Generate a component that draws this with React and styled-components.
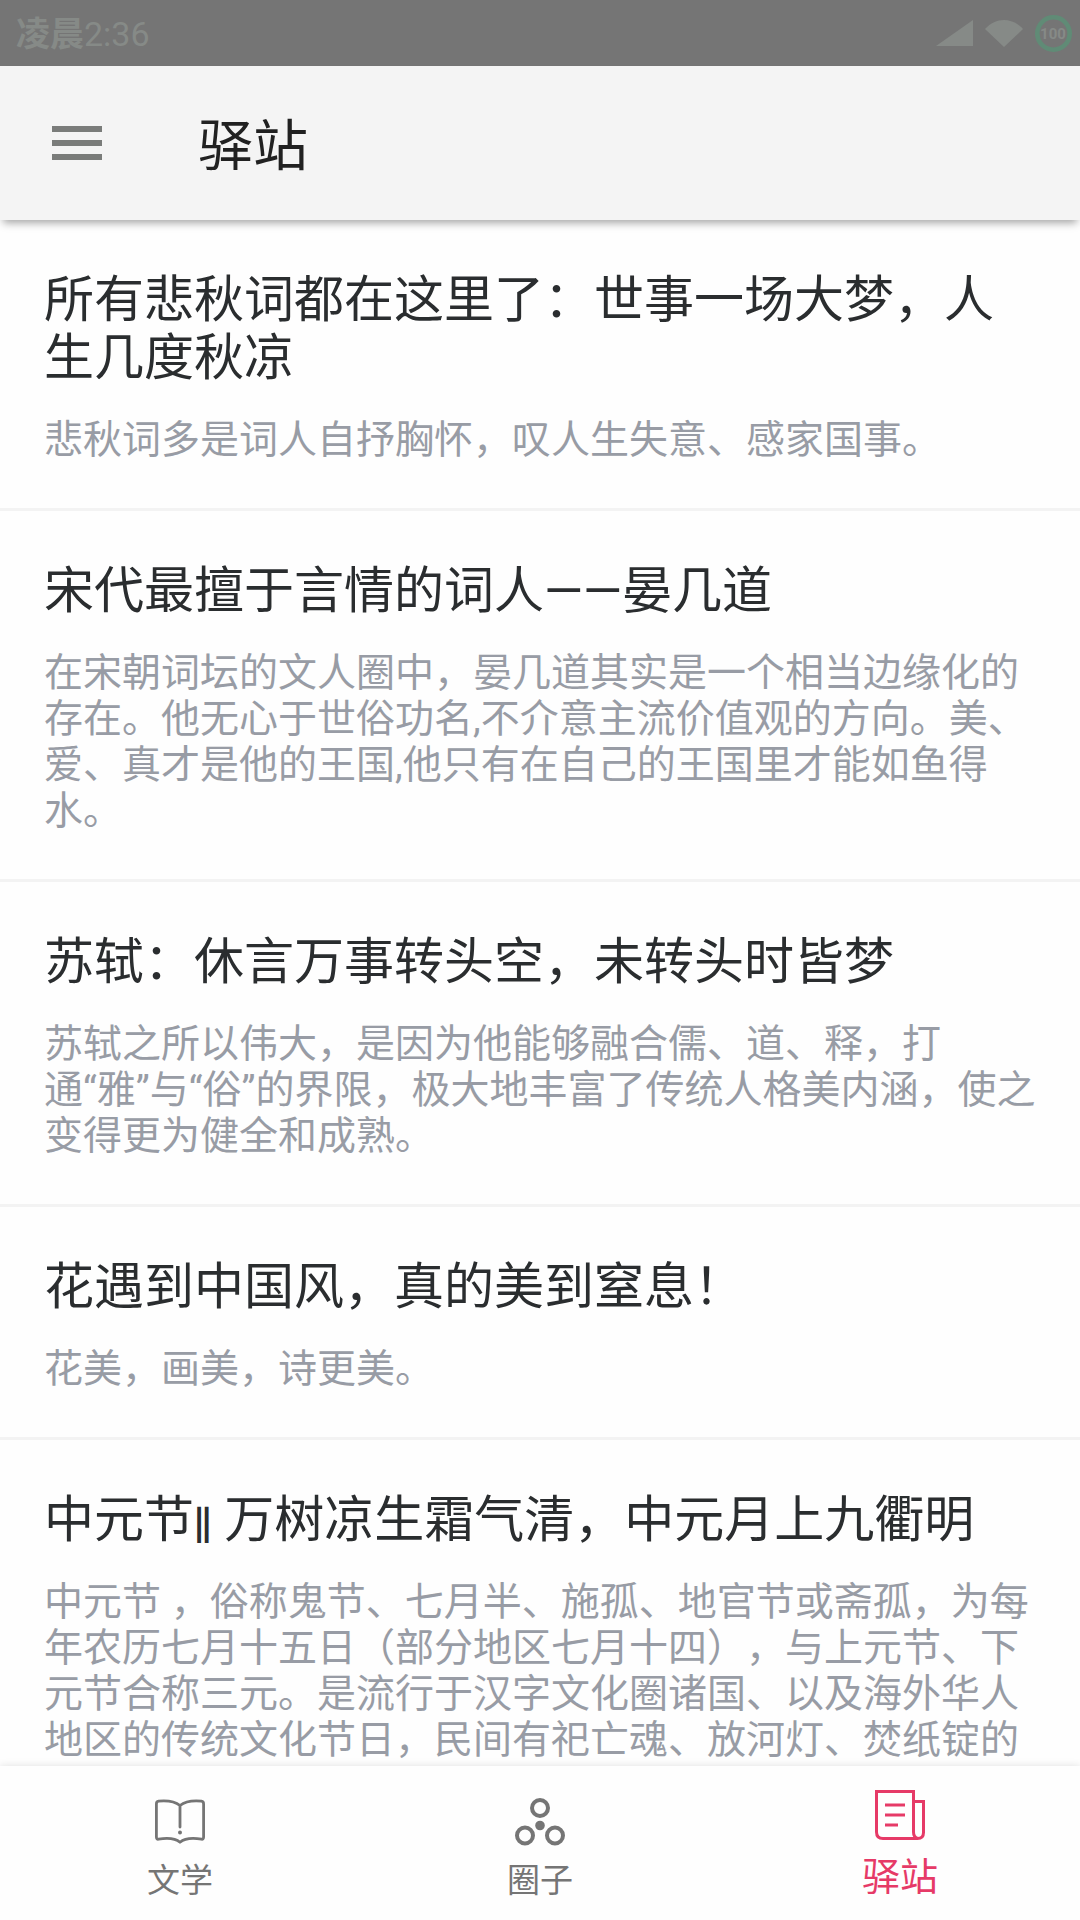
import React from "react";
import styled, { createGlobalStyle } from "styled-components";

const GlobalStyle = createGlobalStyle`
  * {
    box-sizing: border-box;
  }
  body {
    margin: 0;
    background: #fefefe;
    font-family: Roboto, "Noto Sans CJK SC", sans-serif;
    text-spacing-trim: space-all;
  }
`;

const Screen = styled.div`
  display: flex;
  flex-direction: column;
  height: 100vh;
`;

const StatusBar = styled.div`
  display: flex;
  align-items: center;
  justify-content: space-between;
  flex: none;
  height: 66px;
  padding: 0 8px 0 16px;
  background: #757575;
  color: #868a87;
`;
const Clock = styled.span`
  padding-top: 2px;
  font-size: 34px;
  line-height: 40px;
`;
const Period = styled.span`
  font-weight: 700;
`;
const StatusIcons = styled.div`
  display: flex;
  align-items: center;
  gap: 12px;
`;

const Header = styled.header`
  display: flex;
  align-items: center;
  flex: none;
  height: 154px;
  padding: 0 52px;
  gap: 96px;
  background: #f4f4f4;
  box-shadow: 0 6px 8px -3px rgba(0, 0, 0, 0.35);
  z-index: 1;
`;
const MenuButton = styled.button`
  display: flex;
  padding: 0;
  border: 0;
  background: none;
  cursor: pointer;
`;
const HeaderTitle = styled.h1`
  margin: 0;
  padding-top: 6px;
  font-size: 55px;
  font-weight: 400;
  line-height: 64px;
  color: #212121;
`;

const ArticleList = styled.main`
  flex: 1;
  min-height: 0;
  overflow-y: auto;
  scrollbar-width: none;
`;
const Article = styled.article`
  display: flex;
  flex-direction: column;
  gap: 30px;
  padding: 51px 44px 45px;
  border-bottom: 3px solid #f3f3f3;
`;
const ArticleTitle = styled.h2`
  margin: 0;
  font-size: 50px;
  font-weight: 400;
  line-height: 58px;
  color: #2a2d2f;
`;
const Summary = styled.p`
  margin: 0;
  font-size: 39px;
  line-height: 46px;
  color: #989ca5;
`;
const Bars = styled.span`
  font-family: Lato, "Liberation Sans", sans-serif;
  font-size: 39px;
  font-weight: 700;
  line-height: 1;
`;

const TabBar = styled.nav`
  display: flex;
  flex: none;
  height: 154px;
  background: #fefefe;
  box-shadow: 0 0 8px rgba(0, 0, 0, 0.12);
  z-index: 1;
`;
const Tab = styled.a`
  display: flex;
  flex: 1;
  flex-direction: column;
  align-items: center;
  justify-content: flex-end;
  gap: ${(props) => (props.$active ? "13px" : "15px")};
  padding-bottom: 19px;
  font-size: ${(props) => (props.$active ? "38px" : "33px")};
  line-height: ${(props) => (props.$active ? "48px" : "40px")};
  color: ${(props) => (props.$active ? "#e63a67" : "#757575")};
  text-decoration: none;
`;

const SignalIcon = () => (
  <svg width="37" height="26" viewBox="0 0 37 26" fill="#868a87">
    <path d="M0 26 37 0V26Z" />
  </svg>
);

const WifiIcon = () => (
  <svg width="38" height="27" viewBox="0 0 38 27" fill="#868a87">
    <path d="M0 9C11 -3 27 -3 38 9L19 27Z" />
  </svg>
);

const BatteryIcon = () => (
  <svg width="37" height="37" viewBox="0 0 37 37">
    <circle cx="18.5" cy="18.5" r="16.2" fill="none" stroke="#608b76" strokeWidth="4.6" />
    <text x="18" y="24" textAnchor="middle" fontSize="15" fontWeight="700" fill="#868a87">
      100
    </text>
  </svg>
);

const MenuIcon = () => (
  <svg width="50" height="34" viewBox="0 0 50 34" fill="#7a7c7a">
    <path d="M0 0h50v6H0zM0 14h50v6H0zM0 28h50v6H0z" />
  </svg>
);

const BookIcon = () => (
  <svg width="50" height="50" viewBox="0 0 50 50" fill="none" stroke="currentColor" strokeWidth="2.8" strokeLinecap="round" strokeLinejoin="round">
    <path d="M25 9.5C20 5.5 11 4.5 3.5 5.2Q1.4 5.5 1.4 8V41Q1.4 43.5 3.5 43.2C11 42 20 42 25 46.3C30 42 39 42 46.5 43.2Q48.6 43.5 48.6 41V8Q48.6 5.5 46.5 5.2C39 4.5 30 5.5 25 9.5V31" />
    <circle cx="25" cy="36.5" r="2" fill="currentColor" stroke="none" />
  </svg>
);

const CircleIcon = () => (
  <svg width="50" height="50" viewBox="0 0 50 50" fill="none" stroke="currentColor" strokeWidth="4">
    <circle cx="25" cy="12" r="8" />
    <circle cx="10" cy="39.5" r="8" />
    <circle cx="40" cy="39.5" r="8" />
    <circle cx="25" cy="29.5" r="4.8" fill="currentColor" stroke="none" />
  </svg>
);

const NewsIcon = () => (
  <svg width="50" height="50" viewBox="0 0 50 50" fill="none" stroke="currentColor" strokeWidth="3">
    <path d="M38.5 1.5H1.5V42Q1.5 48.5 8 48.5H42.5Q38.5 47 38.5 42ZM38.5 11.5H48.5V42.5Q48.5 48.5 42.5 48.5" />
    <path d="M10 15H30M10 25H30M10 35H23" />
  </svg>
);

const articles = [
  {
    id: 1,
    title: "所有悲秋词都在这里了：世事一场大梦，人生几度秋凉",
    summary: "悲秋词多是词人自抒胸怀，叹人生失意、感家国事。",
  },
  {
    id: 2,
    title: "宋代最擅于言情的词人——晏几道",
    summary:
      "在宋朝词坛的文人圈中，晏几道其实是一个相当边缘化的存在。他无心于世俗功名,不介意主流价值观的方向。美、爱、真才是他的王国,他只有在自己的王国里才能如鱼得水。",
  },
  {
    id: 3,
    title: "苏轼：休言万事转头空，未转头时皆梦",
    // word joiners keep the quotes on the line of the word before them
    summary:
      "苏轼之所以伟大，是因为他能够融合儒、道、释，打通\u2060“雅”\u2060与“俗”的界限，极大地丰富了传统人格美内涵，使之变得更为健全和成熟。",
  },
  {
    id: 4,
    title: "花遇到中国风，真的美到窒息！",
    summary: "花美，画美，诗更美。",
  },
  {
    id: 5,
    title: (
      <>
        中元节<Bars>‖</Bars> 万树凉生霜气清，中元月上九衢明
      </>
    ),
    summary:
      "中元节 ，俗称鬼节、七月半、施孤、地官节或斋孤，为每年农历七月十五日（部分地区七月十四），与上元节、下元节合称三元。是流行于汉字文化圈诸国、以及海外华人地区的传统文化节日，民间有祀亡魂、放河灯、焚纸锭的",
  },
];

const tabs = [
  { label: "文学", Icon: BookIcon },
  { label: "圈子", Icon: CircleIcon },
  { label: "驿站", Icon: NewsIcon, active: true },
];

const App = () => {
  return (
    <Screen lang="zh-CN">
      <GlobalStyle />
      <StatusBar>
        <Clock>
          <Period>凌晨</Period>2:36
        </Clock>
        <StatusIcons>
          <SignalIcon />
          <WifiIcon />
          <BatteryIcon />
        </StatusIcons>
      </StatusBar>
      <Header>
        <MenuButton type="button" aria-label="菜单">
          <MenuIcon />
        </MenuButton>
        <HeaderTitle>驿站</HeaderTitle>
      </Header>
      <ArticleList>
        {articles.map((article) => (
          <Article key={article.id}>
            <ArticleTitle>{article.title}</ArticleTitle>
            <Summary>{article.summary}</Summary>
          </Article>
        ))}
      </ArticleList>
      <TabBar>
        {tabs.map(({ label, Icon, active }) => (
          <Tab key={label} href="#" $active={active} aria-current={active ? "page" : undefined}>
            <Icon />
            {label}
          </Tab>
        ))}
      </TabBar>
    </Screen>
  );
};

export default App;
